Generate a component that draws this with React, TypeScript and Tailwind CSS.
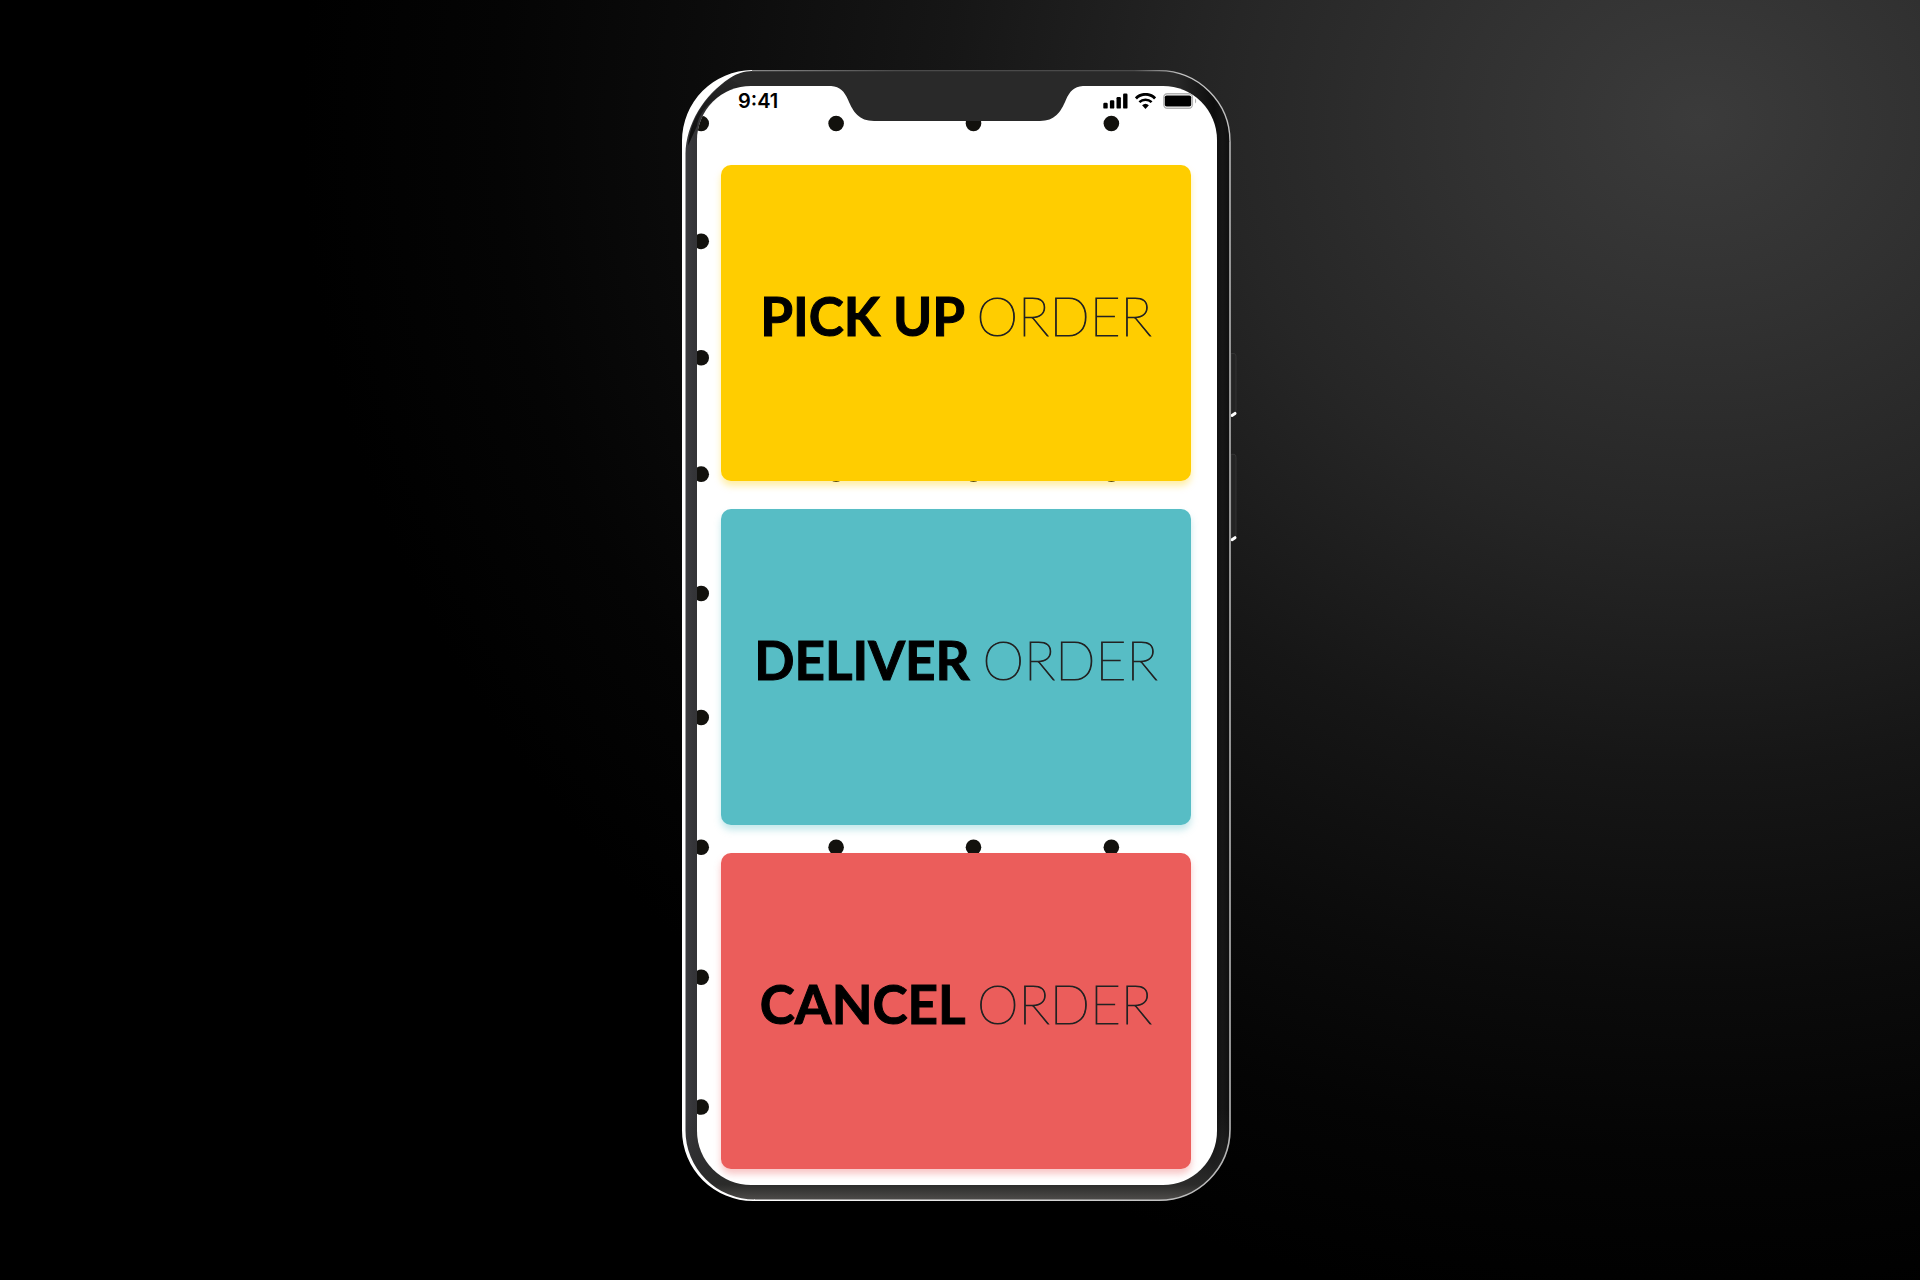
type Action = {
  verb: string;
  noun: string;
  className: string;
};

const actions: Action[] = [
  { verb: "PICK UP", noun: "ORDER", className: "bg-[#ffcd00] shadow-[0_5px_7px_rgba(255,205,0,0.35)]" },
  { verb: "DELIVER", noun: "ORDER", className: "bg-[#57bdc5] shadow-[0_5px_7px_rgba(87,189,197,0.35)]" },
  { verb: "CANCEL", noun: "ORDER", className: "bg-[#eb5d5b] shadow-[0_5px_7px_rgba(235,93,91,0.35)]" },
];

const dotRows = [37.5, 155.5, 272, 388.5, 508, 632, 762, 892, 1022];
const dotColumns = [4, 139, 276.5, 414.5];

function DotPattern() {
  return (
    <svg aria-hidden="true" viewBox="0 0 520 1100" className="absolute inset-0 h-full w-full">
      {dotRows.map((y) =>
        dotColumns.map((x) => <circle key={`${x}-${y}`} cx={x} cy={y} r="7.8" fill="#12110d" />)
      )}
    </svg>
  );
}

function PhoneFrame() {
  return (
    <svg
      aria-hidden="true"
      viewBox="0 0 549 1133"
      preserveAspectRatio="none"
      className="absolute inset-0 h-full w-full overflow-visible"
    >
      <defs>
        <linearGradient id="body" x1="0" y1="0" x2="1" y2="0">
          <stop offset="0" stopColor="#3e3e42" />
          <stop offset="0.02" stopColor="#353538" />
          <stop offset="0.1" stopColor="#292929" />
          <stop offset="0.9" stopColor="#292929" />
          <stop offset="0.97" stopColor="#0d0d0d" />
          <stop offset="0.985" stopColor="#161616" />
          <stop offset="1" stopColor="#0e0e0e" />
        </linearGradient>
        <linearGradient id="chin" gradientUnits="userSpaceOnUse" x1="0" y1="1040" x2="0" y2="1132">
          <stop offset="0" stopColor="#2a2a2a" stopOpacity="0" />
          <stop offset="0.6" stopColor="#2a2a2a" stopOpacity="0.6" />
          <stop offset="0.83" stopColor="#2b2b2a" />
          <stop offset="1" stopColor="#4e4c4a" />
        </linearGradient>
        <linearGradient id="rim" x1="0" y1="0" x2="1" y2="0">
          <stop offset="0" stopColor="#ffffff" />
          <stop offset="0.5" stopColor="#e0e0e0" />
          <stop offset="1" stopColor="#b5b5b5" />
        </linearGradient>
        <linearGradient id="topRim" x1="0" y1="0" x2="1" y2="0">
          <stop offset="0" stopColor="#8a8a8a" />
          <stop offset="0.3" stopColor="#4a4a4a" />
          <stop offset="0.8" stopColor="#4a4a4a" />
          <stop offset="0.9" stopColor="#c4c4c4" />
          <stop offset="1" stopColor="#c0c0c0" />
        </linearGradient>
        <linearGradient id="innerEdge" x1="0" y1="1" x2="1" y2="0">
          <stop offset="0" stopColor="#050505" stopOpacity="0.9" />
          <stop offset="1" stopColor="#050505" stopOpacity="0" />
        </linearGradient>
      </defs>

      {/* volume and power keys */}
      <path d="M549 284h3q2 0 2 3v54l-5 6z" fill="#242424" stroke="#383838" strokeWidth="0.8" />
      <path d="M549 385h3q2 0 2 3v78l-5 6z" fill="#242424" stroke="#383838" strokeWidth="0.8" />
      <path d="M550 346l3-2" stroke="#ffffff" strokeWidth="3" strokeLinecap="round" />
      <path d="M550 470.5l3-2" stroke="#ffffff" strokeWidth="3" strokeLinecap="round" />

      <rect x="0.5" y="0.5" width="548" height="1132" rx="71" fill="url(#body)" />
      <path d="M1 1040V1061a71 71 0 0 0 71 71H477a71 71 0 0 0 71-71V1040z" fill="url(#chin)" />

      {/* bright metal edge */}
      <path
        d="M0 71V1062A71 71 0 0 0 71 1133H73V1131.4A69 69 0 0 1 3.5 1062V84C4 54 22 25 48 8C56 3 62 1.5 70 1V0A71 71 0 0 0 0 71z"
        fill="#ffffff"
      />
      <path d="M6 76C8 50 22 27 48 9L62 17C36 22 18 38 15 56z" fill="url(#innerEdge)" />
      <path
        d="M72 1132.2H477a71 71 0 0 0 71-71V72"
        fill="none"
        stroke="url(#rim)"
        strokeWidth="1.6"
      />
      <path d="M70 0.6H477a71 71 0 0 1 71 71.4" fill="none" stroke="url(#topRim)" strokeWidth="1.4" />
    </svg>
  );
}

function Notch() {
  return (
    <svg
      aria-hidden="true"
      viewBox="0 0 252 36"
      className="absolute top-0 left-1/2 w-[48.4%] -translate-x-1/2"
    >
      <path
        d="M0 0C9 1 13 5 17 14C22 26 28 35 43 35H209C224 35 230 26 235 14C239 5 243 1 252 0z"
        fill="#292929"
      />
    </svg>
  );
}

function StatusIcons() {
  return (
    <div className="flex items-center gap-[7px]">
      <svg aria-label="Signal" width="25" height="16" viewBox="0 0 25 16">
        <rect x="0.3" y="9.8" width="4.4" height="5.8" rx="1.2" />
        <rect x="6.9" y="7.2" width="4.4" height="8.4" rx="1.2" />
        <rect x="13.5" y="4" width="4.4" height="11.6" rx="1.2" />
        <rect x="20.1" y="0.6" width="4.4" height="15" rx="1.2" />
      </svg>
      <svg aria-label="Wi-Fi" width="21" height="16" viewBox="0 0 21 16">
        <path d="M0.9 5.4a13.4 13.4 0 0 1 19.2 0" fill="none" stroke="#000" strokeWidth="2.9" />
        <path d="M4.4 9.2a8.6 8.6 0 0 1 12.2 0" fill="none" stroke="#000" strokeWidth="2.5" />
        <path d="M7.1 12.3a5 5 0 0 1 6.8 0L10.5 15.9z" />
      </svg>
      <svg aria-label="Battery" width="36" height="16" viewBox="0 0 36 16">
        <rect x="0.8" y="0.8" width="28.6" height="14.4" rx="3.5" fill="none" stroke="#b3b3b3" strokeWidth="1.4" />
        <rect x="1.8" y="2.4" width="26.4" height="11.2" rx="1.8" />
        <path d="M32 5.5c1.6 1 1.6 4 0 5z" fill="#b3b3b3" />
      </svg>
    </div>
  );
}

function ActionCard({ verb, noun, className }: Action) {
  return (
    <button
      type="button"
      className={`flex aspect-[470/316] w-full items-center justify-center rounded-[10px] pb-4 text-[53px] leading-none whitespace-pre text-black ${className}`}
    >
      <span className="font-bold [-webkit-text-stroke:1px_#000]">{verb} </span>
      <span className="font-thin text-[#222222] [-webkit-text-stroke:1px_#222222]">{noun}</span>
    </button>
  );
}

export default function App() {
  return (
    <main className="flex min-h-screen items-start justify-center bg-black bg-[radial-gradient(ellipse_1400px_1200px_at_1700px_120px,#3b3b3b_0%,#313131_17%,#262626_34%,#161616_54%,#0b0b0b_72%,#040404_86%,#000000_100%)] pt-[70px] pr-[7px] pb-10 font-[Lato,sans-serif]">
      <div className="relative w-full max-w-[549px] pt-4 pr-[14px] pb-4 pl-[15px]">
        <PhoneFrame />
        <div className="relative overflow-hidden rounded-[54px] bg-white pb-4">
          <DotPattern />
          <Notch />
          <header className="relative flex h-[79px] items-start justify-between pt-1 pr-[18px] pl-[41px]">
            <time className="font-[Inter,sans-serif] text-[20px] leading-[22px] font-semibold">9:41</time>
            <div className="pt-[3px]">
              <StatusIcons />
            </div>
          </header>
          <div className="relative flex flex-col gap-7 pr-[26px] pl-6">
            {actions.map((action) => (
              <ActionCard key={action.verb} {...action} />
            ))}
          </div>
        </div>
      </div>
    </main>
  );
}
